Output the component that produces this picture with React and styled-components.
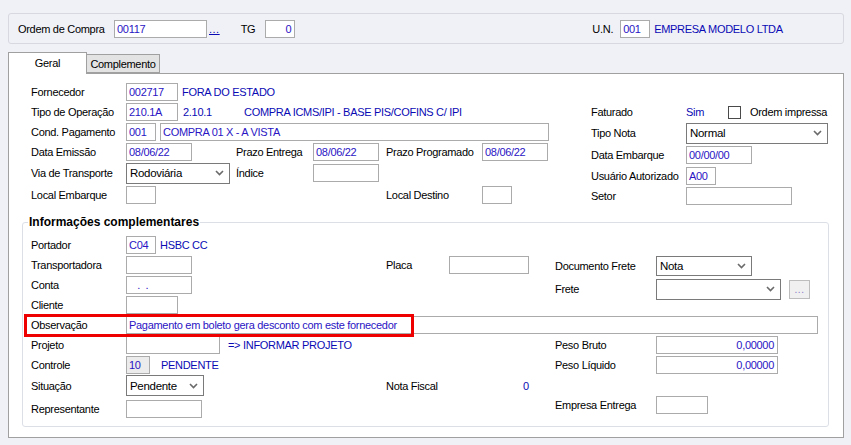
import React from "react";
import styled, { createGlobalStyle } from "styled-components";

const GlobalStyle = createGlobalStyle`
  html, body { margin: 0; padding: 0; background: #f0f0f7; }
  body { font-family: "Liberation Sans", Arial, sans-serif; font-size: 11px; letter-spacing: -0.3px; color: #000; }
  * { box-sizing: border-box; }
`;

const Page = styled.div`
  width: 851px;
  height: 445px;
  padding: 13px 7px 0 8px;
  background: #f0f0f7;
`;

const TopBar = styled.div`
  display: flex;
  align-items: center;
  height: 31px;
  border: 1px solid #d8d8e0;
  border-radius: 3px;
  padding-left: 9px;
`;

const Label = styled.span`
  display: inline-block;
  white-space: nowrap;
  color: #000;
  ${(p) => (p.$w ? `width: ${p.$w}px; flex: none;` : "")}
  ${(p) => (p.$ml ? `margin-left: ${p.$ml}px;` : "")}
`;

const Info = styled.span`
  display: inline-block;
  white-space: nowrap;
  color: #0a0ab4;
  ${(p) => (p.$w ? `width: ${p.$w}px; flex: none;` : "")}
  ${(p) => (p.$ml ? `margin-left: ${p.$ml}px;` : "")}
`;

const Input = styled.div`
  flex: none;
  width: ${(p) => p.$w}px;
  height: 18px;
  border: 1px solid #ababab;
  background: ${(p) => (p.$disabled ? "#ececec" : "#fff")};
  color: #2a14c4;
  padding: 0 3px 0 2px;
  display: flex;
  align-items: center;
  justify-content: ${(p) => (p.$right ? "flex-end" : "flex-start")};
  white-space: nowrap;
  overflow: hidden;
  ${(p) => (p.$ml ? `margin-left: ${p.$ml}px;` : "")}
`;

const Link = styled.span`
  color: #0a0ab4;
  text-decoration: underline;
  margin-left: 2px;
  letter-spacing: 0.5px;
`;

const SelectBox = styled.div`
  flex: none;
  position: relative;
  width: ${(p) => p.$w}px;
  height: ${(p) => p.$h || 21}px;
  border: 1px solid #7a7a7a;
  background: #fff;
  color: #000;
  padding: 0 18px 0 3px;
  display: flex;
  align-items: center;
  white-space: nowrap;
  font-size: 11.5px;
`;

const Chevron = styled.svg`
  position: absolute;
  right: 5px;
  top: 50%;
  margin-top: -3px;
  width: 9px;
  height: 6px;
`;

const Select = ({ w, h, children }) => (
  <SelectBox $w={w} $h={h}>
    {children}
    <Chevron viewBox="0 0 9 6">
      <polyline points="1,1 4.5,4.5 8,1" fill="none" stroke="#6a6a6a" strokeWidth="1.6" />
    </Chevron>
  </SelectBox>
);

const Checkbox = styled.div`
  width: 13px;
  height: 13px;
  border: 1px solid #4a4a4a;
  background: #fff;
  flex: none;
`;

const DotsButton = styled.div`
  flex: none;
  width: 21px;
  height: 19px;
  margin-left: 8px;
  border: 1px solid #bdbdbd;
  background: #f0f0f0;
  color: #8a7ac8;
  display: flex;
  align-items: center;
  justify-content: center;
  font-size: 10px;
  letter-spacing: 0.5px;
`;

const TabStrip = styled.div`
  display: flex;
  align-items: flex-end;
  height: 29px;
  position: relative;
  z-index: 2;
`;

const Tab = styled.div`
  height: ${(p) => (p.$active ? 22 : 19)}px;
  width: ${(p) => p.$w}px;
  border: 1px solid #a0a0a0;
  border-bottom: ${(p) => (p.$active ? "none" : "1px solid #a0a0a0")};
  background: ${(p) => (p.$active ? "#fff" : "#e3e3e3")};
  margin-bottom: ${(p) => (p.$active ? -1 : 0)}px;
  ${(p) => (p.$ml ? `margin-left: ${p.$ml}px;` : "")}
  display: flex;
  align-items: center;
  justify-content: center;
  padding-bottom: ${(p) => (p.$active ? 2 : 0)}px;
  color: #000;
`;

const Panel = styled.div`
  width: 836px;
  height: 365px;
  border: 1px solid #a0a0a0;
  background: #fff;
  padding: 8px 0 0 22px;
`;

const TopSection = styled.div`
  display: flex;
`;

const LeftGrid = styled.div`
  width: 560px;
  display: grid;
  grid-template-columns: 95px 110px 77px 73px 96px 1fr;
  grid-template-rows: 20px 20px 20px 20px 22px 22px;
  align-items: center;
`;

const Span = styled.div`
  grid-column: ${(p) => p.$col || "2 / -1"};
  display: flex;
  align-items: center;
`;

const RightGrid = styled.div`
  margin-top: ${(p) => (p.$mt === undefined ? 20 : p.$mt)}px;
  display: grid;
  grid-template-columns: ${(p) => p.$label || 95}px 1fr;
  grid-template-rows: ${(p) => p.$rows};
  align-items: center;
  align-content: start;
`;

const Cell = styled.div`
  display: flex;
  align-items: center;
`;

const Group = styled.fieldset`
  margin: 9px 0 0 -9px;
  width: 807px;
  border: 1px solid #dcdfe6;
  border-radius: 3px;
  padding: 6px 8px 5px 8px;
  min-width: 0;
`;

const Legend = styled.legend`
  font-weight: bold;
  font-size: 12px;
  letter-spacing: 0;
  padding: 0 1px;
  margin-left: -3px;
  color: #000;
`;

const GroupRow = styled.div`
  display: flex;
`;

const GroupLeft = styled.div`
  width: 524px;
  display: grid;
  grid-template-columns: 95px 260px 63px 106px;
  grid-template-rows: ${(p) => p.$rows};
  align-items: center;
`;

const ObsRow = styled.div`
  position: relative;
  height: 20px;
  display: flex;
  align-items: center;
`;

const Highlight = styled.div`
  position: absolute;
  left: -7px;
  top: -1px;
  width: 390px;
  height: 23px;
  border: 3px solid #ee0000;
  pointer-events: none;
`;

const LowerLeft = styled.div`
  width: 524px;
  display: grid;
  grid-template-columns: 95px 260px 169px;
  grid-template-rows: 20px 20px 21px 25px;
  align-items: center;
`;

export default function App() {
  return (
    <>
      <GlobalStyle />
      <Page>
        <TopBar>
          <Label $w={96}>Ordem de Compra</Label>
          <Input $w={93}>00117</Input>
          <Link>...</Link>
          <Label $ml={21}>TG</Label>
          <Input $w={30} $ml={10} $right>0</Input>
          <Label $ml={297}>U.N.</Label>
          <Input $w={30} $ml={7}>001</Input>
          <Info $ml={4}>EMPRESA MODELO LTDA</Info>
        </TopBar>

        <TabStrip>
          <Tab $active $w={79}>Geral</Tab>
          <Tab $w={74} $ml={-1}>Complemento</Tab>
        </TabStrip>

        <Panel>
          <TopSection>
            <LeftGrid>
              <Label>Fornecedor</Label>
              <Span>
                <Input $w={52}>002717</Input>
                <Info $ml={4}>FORA DO ESTADO</Info>
              </Span>

              <Label>Tipo de Operação</Label>
              <Span>
                <Input $w={52}>210.1A</Input>
                <Info $ml={5} $w={61}>2.10.1</Info>
                <Info>COMPRA ICMS/IPI - BASE PIS/COFINS C/ IPI</Info>
              </Span>

              <Label>Cond. Pagamento</Label>
              <Span>
                <Input $w={30}>001</Input>
                <Input $w={389} $ml={4}>COMPRA 01 X - A VISTA</Input>
              </Span>

              <Label>Data Emissão</Label>
              <Cell><Input $w={66}>08/06/22</Input></Cell>
              <Label>Prazo Entrega</Label>
              <Cell><Input $w={66}>08/06/22</Input></Cell>
              <Label>Prazo Programado</Label>
              <Cell><Input $w={66}>08/06/22</Input></Cell>

              <Label>Via de Transporte</Label>
              <Cell><Select w={104} h={21}>Rodoviária</Select></Cell>
              <Label>Índice</Label>
              <Cell><Input $w={66} /></Cell>
              <span />
              <span />

              <Label>Local Embarque</Label>
              <Cell><Input $w={30} /></Cell>
              <span />
              <span />
              <Label>Local Destino</Label>
              <Cell><Input $w={30} /></Cell>
            </LeftGrid>

            <RightGrid $rows="20px 22px 22px 20px 20px">
              <Label>Faturado</Label>
              <Cell>
                <Info $w={42}>Sim</Info>
                <Checkbox />
                <Label $ml={9}>Ordem impressa</Label>
              </Cell>

              <Label>Tipo Nota</Label>
              <Cell><Select w={142} h={21}>Normal</Select></Cell>

              <Label>Data Embarque</Label>
              <Cell><Input $w={66}>00/00/00</Input></Cell>

              <Label>Usuário Autorizado</Label>
              <Cell><Input $w={30}>A00</Input></Cell>

              <Label>Setor</Label>
              <Cell><Input $w={106} /></Cell>
            </RightGrid>
          </TopSection>

          <Group>
            <Legend>Informações complementares</Legend>
            <GroupRow>
              <GroupLeft $rows="20px 20px 20px 20px">
                <Label>Portador</Label>
                <Span $col="2 / -1">
                  <Input $w={30}>C04</Input>
                  <Info $ml={4}>HSBC CC</Info>
                </Span>

                <Label>Transportadora</Label>
                <Cell><Input $w={66} /></Cell>
                <Label>Placa</Label>
                <Cell><Input $w={80} /></Cell>

                <Label>Conta</Label>
                <Cell><Input $w={66}>&nbsp;&nbsp;&nbsp;.&nbsp;&nbsp;.</Input></Cell>
                <span />
                <span />

                <Label>Cliente</Label>
                <Cell><Input $w={52} /></Cell>
              </GroupLeft>

              <RightGrid $label={101} $rows="22px 24px">
                <Label>Documento Frete</Label>
                <Cell><Select w={96} h={20}>Nota</Select></Cell>

                <Label>Frete</Label>
                <Cell>
                  <Select w={125} h={21}></Select>
                  <DotsButton>...</DotsButton>
                </Cell>
              </RightGrid>
            </GroupRow>

            <ObsRow>
              <Label $w={95}>Observação</Label>
              <Input $w={692}>Pagamento em boleto gera desconto com este fornecedor</Input>
              <Highlight />
            </ObsRow>

            <GroupRow>
              <LowerLeft>
                <Label>Projeto</Label>
                <Cell>
                  <Input $w={94} />
                  <Info $ml={8}>=&gt; INFORMAR PROJETO</Info>
                </Cell>
                <span />

                <Label>Controle</Label>
                <Cell>
                  <Input $w={24} $disabled>10</Input>
                  <Info $ml={11}>PENDENTE</Info>
                </Cell>
                <span />

                <Label>Situação</Label>
                <Cell><Select w={78} h={21}>Pendente</Select></Cell>
                <Cell>
                  <Label $w={137}>Nota Fiscal</Label>
                  <Info>0</Info>
                </Cell>

                <Label>Representante</Label>
                <Cell><Input $w={76} /></Cell>
                <span />
              </LowerLeft>

              <RightGrid $label={101} $rows="20px 20px 20px 20px" $mt={0}>
                <Label>Peso Bruto</Label>
                <Cell><Input $w={122} $right>0,00000</Input></Cell>

                <Label>Peso Líquido</Label>
                <Cell><Input $w={122} $right>0,00000</Input></Cell>

                <span />
                <span />

                <Label>Empresa Entrega</Label>
                <Cell><Input $w={52} /></Cell>
              </RightGrid>
            </GroupRow>
          </Group>
        </Panel>
      </Page>
    </>
  );
}
